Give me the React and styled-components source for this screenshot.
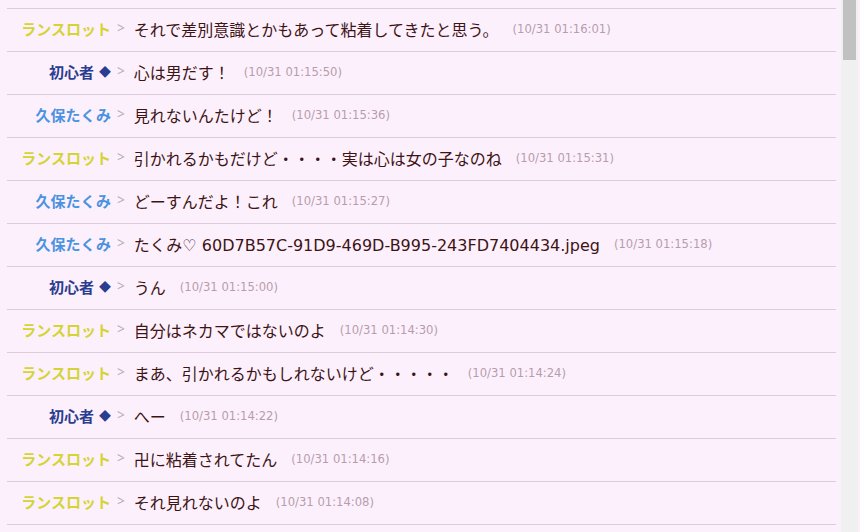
import React from "react";
import styled, { createGlobalStyle } from "styled-components";

const Global = createGlobalStyle`
  html, body { margin: 0; padding: 0; background: #fdf0fd; }
  body { font-family: "DejaVu Sans", "Noto Sans CJK JP", sans-serif; }
`;

const Page = styled.div`
  display: flex;
  width: 860px;
  height: 532px;
  overflow: hidden;
  background: #fdf0fd;
`;

const List = styled.ul`
  flex: 0 0 841px;
  box-sizing: border-box;
  list-style: none;
  margin: 0;
  padding: 8px 5px 0 7px;
`;

const Scrollbar = styled.div`
  flex: 0 0 17px;
  display: flex;
  flex-direction: column;
  align-items: center;
  background: #f0f0f0;
`;

const Thumb = styled.div`
  width: 13px;
  height: 60px;
  background: #c1c1c1;
`;

const Row = styled.li`
  display: flex;
  align-items: center;
  box-sizing: border-box;
  height: 43px;
  padding-bottom: 3px;
  border-top: 1px solid #ddcbdd;
  &:last-child { height: 44px; border-bottom: 1px solid #ddcbdd; }
`;

const NAME_COLORS = {
  lancelot: "#d4d432",
  beginner: "#2a3d8f",
  takumi: "#4a93e0",
};

const Name = styled.span`
  flex: 0 0 104px;
  text-align: right;
  font-family: "Noto Sans CJK JP", sans-serif;
  font-size: 15px;
  font-weight: 700;
  color: ${(p) => NAME_COLORS[p.$kind]};
  white-space: nowrap;
`;

const Mark = styled.span`
  font-size: 12px;
  margin-left: 5px;
  position: relative;
  top: -1px;
`;

const Sep = styled.span`
  flex: 0 0 auto;
  margin: 0 9px 0 6px;
  color: #b0b0b0;
  font-family: "Noto Sans", sans-serif;
  font-size: 13.5px;
  position: relative;
  top: -1px;
`;

const Msg = styled.span`
  font-family: "DejaVu Sans", "Noto Sans CJK JP", sans-serif;
  font-size: 16px;
  color: #3d1414;
  white-space: nowrap;
`;

const Time = styled.span`
  margin-left: 14px;
  font-family: "DejaVu Sans", sans-serif;
  font-size: 11.6px;
  color: #b59dab;
  white-space: nowrap;
`;

const NAMES = {
  lancelot: "ランスロット",
  beginner: "初心者",
  takumi: "久保たくみ",
};

const messages = [
  ["lancelot", "それで差別意識とかもあって粘着してきたと思う。", "10/31 01:16:01"],
  ["beginner", "心は男だす！", "10/31 01:15:50"],
  ["takumi", "見れないんたけど！", "10/31 01:15:36"],
  ["lancelot", "引かれるかもだけど・・・・実は心は女の子なのね", "10/31 01:15:31"],
  ["takumi", "どーすんだよ！これ", "10/31 01:15:27"],
  ["takumi", "たくみ♡ 60D7B57C-91D9-469D-B995-243FD7404434.jpeg", "10/31 01:15:18"],
  ["beginner", "うん", "10/31 01:15:00"],
  ["lancelot", "自分はネカマではないのよ", "10/31 01:14:30"],
  ["lancelot", "まあ、引かれるかもしれないけど・・・・・", "10/31 01:14:24"],
  ["beginner", "へー", "10/31 01:14:22"],
  ["lancelot", "卍に粘着されてたん", "10/31 01:14:16"],
  ["lancelot", "それ見れないのよ", "10/31 01:14:08"],
];

export default function App() {
  return (
    <Page>
      <Global />
      <List>
        {messages.map(([kind, text, time], i) => (
          <Row key={i}>
            <Name $kind={kind}>
              {NAMES[kind]}
              {kind === "beginner" && <Mark>◆</Mark>}
            </Name>
            <Sep>&gt;</Sep>
            <Msg>{text}</Msg>
            <Time>({time})</Time>
          </Row>
        ))}
      </List>
      <Scrollbar>
        <Thumb />
      </Scrollbar>
    </Page>
  );
}
